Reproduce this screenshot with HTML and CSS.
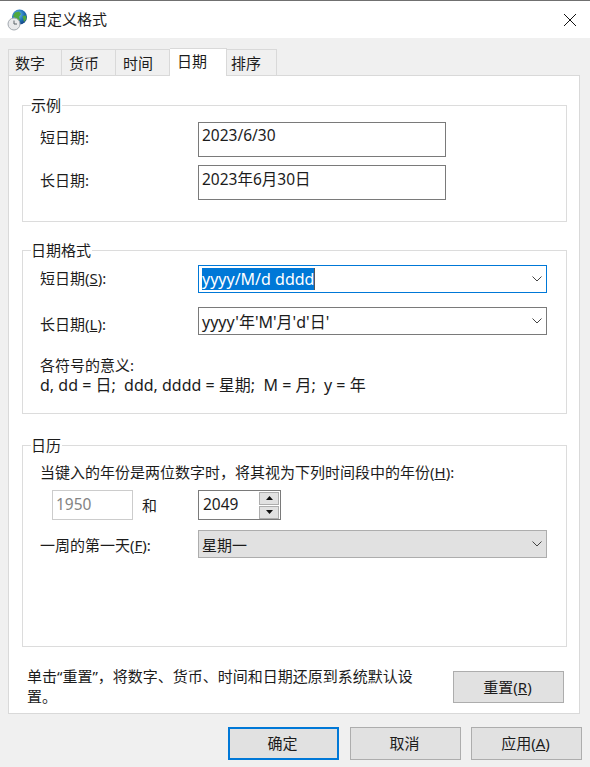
FILE: index.html
```html
<!DOCTYPE html>
<html lang="zh-CN">

<head>
  <meta charset="UTF-8">
  <title>自定义格式</title>
  <link rel="stylesheet" href="styles.css">
</head>

<body>
  <div class="dialog">
    <header class="titlebar">
      <svg class="app-icon" width="20" height="22" viewBox="0 0 20 22">
        <defs>
          <radialGradient id="globe" cx="0.4" cy="0.35" r="0.7">
            <stop offset="0" stop-color="#6fc3ee"/>
            <stop offset="0.6" stop-color="#1f6fb5"/>
            <stop offset="1" stop-color="#123f80"/>
          </radialGradient>
        </defs>
        <circle cx="12.5" cy="8" r="7.5" fill="url(#globe)"/>
        <path d="M8 3.5 12 2.5 14 5 12 8 13 11 10 13 8 9 6 7Z" fill="#4fa83d"/>
        <path d="M15.5 7 19 6.5 19.5 10 17 13Z" fill="#4fa83d"/>
        <circle cx="7" cy="15" r="6" fill="#e9eaec" stroke="#a3a9b0"/>
        <path d="M7 11.5V15H10" fill="none" stroke="#5b6268" stroke-width="1"/>
      </svg>
      <span class="title">自定义格式</span>
      <svg class="close" width="14" height="14" viewBox="0 0 14 14">
        <path d="M1 1 13 13M13 1 1 13" stroke="#111" stroke-width="1" fill="none"/>
      </svg>
    </header>

    <nav class="tabs">
      <div class="tab">数字</div>
      <div class="tab">货币</div>
      <div class="tab">时间</div>
      <div class="tab active">日期</div>
      <div class="tab">排序</div>
    </nav>

    <main class="panel">
      <section class="group group-sample">
        <div class="group-title">示例</div>
        <div class="row">
          <label>短日期:</label>
          <div class="field sample">2023/6/30</div>
        </div>
        <div class="row">
          <label>长日期:</label>
          <div class="field sample">2023年6月30日</div>
        </div>
      </section>

      <section class="group group-format">
        <div class="group-title">日期格式</div>
        <div class="row">
          <label>短日期(<u>S</u>):</label>
          <div class="field combo focused">
            <span class="selected">yyyy/M/d dddd</span>
            <svg class="chevron" width="10" height="6" viewBox="0 0 10 6"><path d="M0.5 0.5 5 5 9.5 0.5" fill="none" stroke="#444"/></svg>
          </div>
        </div>
        <div class="row">
          <label class="label-low">长日期(<u>L</u>):</label>
          <div class="field combo">
            <span>yyyy'年'M'月'd'日'</span>
            <svg class="chevron" width="10" height="6" viewBox="0 0 10 6"><path d="M0.5 0.5 5 5 9.5 0.5" fill="none" stroke="#444"/></svg>
          </div>
        </div>
        <p class="legend-note">各符号的意义:<br><span class="legend-line">d, dd = 日;&nbsp; ddd, dddd = 星期;&nbsp; M = 月;&nbsp; y = 年</span></p>
      </section>

      <section class="group group-calendar">
        <div class="group-title">日历</div>
        <p class="year-note">当键入的年份是两位数字时，将其视为下列时间段中的年份(<u>H</u>):</p>
        <div class="year-row">
          <div class="field year-from">1950</div>
          <span class="and">和</span>
          <div class="field year-to">
            <span>2049</span>
            <div class="spin">
              <button class="spin-btn"><svg width="7" height="4" viewBox="0 0 7 4"><path d="M3.5 0 7 4H0Z" fill="#111"/></svg></button>
              <button class="spin-btn"><svg width="7" height="4" viewBox="0 0 7 4"><path d="M0 0H7L3.5 4Z" fill="#111"/></svg></button>
            </div>
          </div>
        </div>
        <div class="row">
          <label class="label-first-day">一周的第一天(<u>F</u>):</label>
          <div class="field combo readonly">
            <span>星期一</span>
            <svg class="chevron" width="10" height="6" viewBox="0 0 10 6"><path d="M0.5 0.5 5 5 9.5 0.5" fill="none" stroke="#444"/></svg>
          </div>
        </div>
      </section>

      <div class="reset-row">
        <p class="reset-note">单击“重置”，将数字、货币、时间和日期还原到系统默认设置。</p>
        <button class="btn reset">重置(<u>R</u>)</button>
      </div>
    </main>

    <footer class="actions">
      <button class="btn primary">确定</button>
      <button class="btn">取消</button>
      <button class="btn">应用(<u>A</u>)</button>
    </footer>
  </div>
</body>

</html>
```

FILE: styles.css
```css
* {
  box-sizing: border-box;
}

body {
  margin: 0;
  width: 590px;
  height: 767px;
  overflow: hidden;
  font-family: "Noto Sans", "Noto Sans CJK SC", sans-serif;
  font-size: 15px;
  color: #1c1c1c;
  background: #f0f0f0;
}

.dialog {
  height: 767px;
  border-top: 1px solid #707070;
}

.titlebar {
  display: flex;
  align-items: center;
  height: 37px;
  padding: 0 13px 0 7px;
  background: #fff;
}

.app-icon {
  margin-right: 5px;
}

.title {
  flex: 1;
  padding-bottom: 2px;
}

.tabs {
  display: flex;
  align-items: flex-end;
  height: 37px;
  padding: 10px 0 0 8px;
}

.tab {
  width: 54px;
  height: 26px;
  padding-left: 7px;
  line-height: 27px;
  background: #f0f0f0;
  border: 1px solid #d9d9d9;
  border-bottom: none;
  border-left: none;
}

.tab:first-child {
  padding-left: 6px;
  border-left: 1px solid #d9d9d9;
}

.tab.active {
  width: 57px;
  height: 28px;
  margin-bottom: -1px;
  position: relative;
  line-height: 25px;
  background: #fff;
}

.tab:last-child {
  width: 50px;
  padding-left: 4px;
}

.panel {
  width: 572px;
  height: 639px;
  margin-left: 8px;
  padding: 29px 12px 0 13px;
  background: #fff;
  border: 1px solid #d9d9d9;
}

.group {
  width: 545px;
  padding: 0 0 0 17px;
  border: 1px solid #dcdcdc;
}

.group-title {
  display: table;
  height: 20px;
  line-height: 20px;
  margin: -11px 0 0 -9px;
  padding: 0 1px 0 0;
  background: #fff;
}

.group-sample {
  height: 117px;
  margin-bottom: 28px;
}

.group-format {
  height: 164px;
  margin-bottom: 31px;
}

.group-calendar {
  height: 202px;
}

.row {
  display: flex;
  align-items: center;
}

.row label {
  width: 158px;
  padding-bottom: 3px;
}

.group-sample .row label {
  padding-bottom: 6px;
}

.row .label-low {
  padding: 5px 0 0;
}

.row .label-first-day {
  padding: 1px 0 0;
}

.field {
  display: flex;
  align-items: center;
  padding-left: 3px;
  border: 1px solid #7a7a7a;
  background: #fff;
}

.sample {
  width: 248px;
  height: 35px;
  padding-bottom: 9px;
  font-size: 15.5px;
}

.group-sample .row:nth-child(2) {
  margin-top: 7px;
}

.group-sample .row:nth-child(3) {
  margin-top: 8px;
}

.combo {
  width: 349px;
  height: 28px;
  justify-content: space-between;
  padding-right: 4px;
  font-size: 16px;
}

.group-format .row:nth-child(2) {
  margin-top: 5px;
}

.group-format .row:nth-child(3) {
  margin-top: 14px;
}

.focused {
  border-color: #0078d7;
}

.selected {
  color: #fff;
  background: #0078d7;
  line-height: 22px;
  border-right: 1px solid #555;
}

.legend-note {
  margin: 20px 0 0;
  line-height: 20px;
}

.legend-line {
  font-size: 16px;
}

.year-note {
  margin: 7px 0 0;
  line-height: 20px;
}

.year-row {
  display: flex;
  align-items: center;
  margin: 8px 0 10px;
  padding-left: 12px;
}

.year-from {
  width: 81px;
  height: 30px;
  padding-bottom: 3px;
  font-size: 15.5px;
  color: #838383;
  border-color: #ccc;
}

.and {
  width: 65px;
  padding: 0 0 2px 9px;
}

.year-to {
  width: 83px;
  height: 30px;
  justify-content: space-between;
  padding: 0 1px 0 4px;
  font-size: 15.5px;
}

.year-to > span {
  padding-bottom: 3px;
}

.spin {
  display: flex;
  flex-direction: column;
  gap: 1px;
}

.spin-btn {
  display: flex;
  align-items: center;
  justify-content: center;
  width: 20px;
  height: 13px;
  padding: 0;
  background: #e1e1e1;
  border: 1px solid #adadad;
}

.readonly {
  font-size: 15px;
  background: #e1e1e1;
  border-color: #adadad;
}

.reset-row {
  display: flex;
  justify-content: space-between;
  margin-top: 14px;
  padding-left: 5px;
}

.reset-note {
  width: 396px;
  margin: 5px 0 0;
  line-height: 20px;
}

.btn {
  width: 111px;
  height: 32px;
  padding: 0 2px 2px 0;
  font: inherit;
  color: inherit;
  background: #e1e1e1;
  border: 1px solid #adadad;
}

.reset {
  margin: 10px 3px 0 0;
}

.actions {
  display: flex;
  justify-content: flex-end;
  gap: 10px;
  padding: 13px 8px 0 0;
}

.actions .btn {
  height: 33px;
}

.primary {
  margin-right: 1px;
  border: 2px solid #0078d7;
}
```
